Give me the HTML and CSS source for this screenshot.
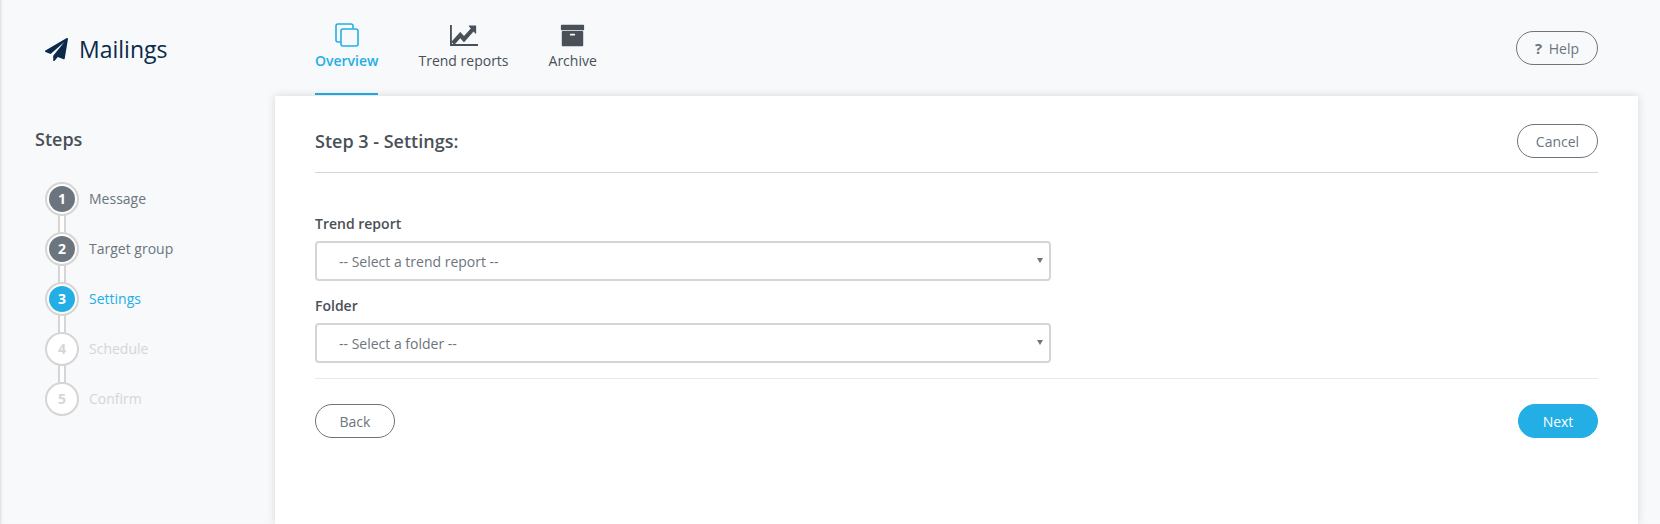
FILE: index.html
```html
<!DOCTYPE html>
<html lang="en">
  <head>
    <title>Mailings</title>
    <meta charset="UTF-8" />
    <link rel="stylesheet" href="styles.css">
  </head>
  <body>
    <header class="top-bar">
      <div class="logo">
        <svg class="logo-icon" viewBox="0 0 1792 1792"><path d="M1764 11q33 24 27 64l-256 1536q-5 29-32 45-14 8-31 8-11 0-24-5l-453-185-242 295q-18 23-49 23-13 0-22-4-19-7-30.5-23.5t-11.5-36.5v-349l864-1059-1069 925-395-162q-37-14-40-55-2-40 32-59l1664-960q15-9 32-9 20 0 36 11z"/></svg>
        <span>Mailings</span>
      </div>
      <nav class="tabs">
        <a class="tab tab-active">
          <span class="tab-icon">
            <svg class="icon-copy" viewBox="0 0 24 24"><path d="M18 5.500V3a2 2 0 0 0-2-2H3a2 2 0 0 0-2 2v14a2 2 0 0 0 2 2h2.500"/><rect x="6" y="6" width="17" height="17" rx="2"/></svg>
          </span>
          Overview
        </a>
        <a class="tab">
          <span class="tab-icon">
            <svg class="icon-chart" viewBox="0 320 1920 1280" preserveAspectRatio="none"><path d="M1920 1472v128h-1920v-1280h128v1152h1792zm-128-1088v435q0 21-19.500 29.500t-35.500-7.500l-121-121-633 633q-10 10-23 10t-23-10l-233-233-416 416-192-192 585-585q10-10 23-10t23 10l233 233 464-464-121-121q-16-16-7.500-35.500t29.500-19.500h435q14 0 23 9t9 23z"/></svg>
          </span>
          Trend reports
        </a>
        <a class="tab">
          <span class="tab-icon">
            <svg class="icon-archive" viewBox="0 0 1792 1792"><path d="M1088 832q0-26-19-45t-45-19h-256q-26 0-45 19t-19 45 19 45 45 19h256q26 0 45-19t19-45zm576-192v960q0 26-19 45t-45 19h-1408q-26 0-45-19t-19-45v-960q0-26 19-45t45-19h1408q26 0 45 19t19 45zm64-448v256q0 26-19 45t-45 19h-1536q-26 0-45-19t-19-45v-256q0-26 19-45t45-19h1536q26 0 45 19t19 45z"/></svg>
          </span>
          Archive
        </a>
      </nav>
      <button class="btn btn-help" type="button"><b>?</b> Help</button>
    </header>

    <div class="main">
      <aside class="sidebar">
        <div class="sidebar-title">Steps</div>
        <ol class="steps">
          <li class="step step-done"><span class="step-ring"><span class="step-num">1</span></span>Message</li>
          <li class="step step-done"><span class="step-ring"><span class="step-num">2</span></span>Target group</li>
          <li class="step step-current"><span class="step-ring"><span class="step-num">3</span></span>Settings</li>
          <li class="step"><span class="step-ring"><span class="step-num">4</span></span>Schedule</li>
          <li class="step"><span class="step-ring"><span class="step-num">5</span></span>Confirm</li>
        </ol>
      </aside>

      <section class="card">
        <div class="card-head">
          <h2 class="card-title">Step 3 - Settings:</h2>
          <button class="btn btn-cancel" type="button">Cancel</button>
        </div>
        <form class="settings">
          <div class="field">
            <label class="field-label">Trend report</label>
            <div class="select-wrapper">
              <select><option>-- Select a trend report --</option></select>
            </div>
          </div>
          <div class="field">
            <label class="field-label">Folder</label>
            <div class="select-wrapper">
              <select><option>-- Select a folder --</option></select>
            </div>
          </div>
          <div class="card-foot">
            <button class="btn btn-back" type="button">Back</button>
            <button class="btn btn-next" type="button">Next</button>
          </div>
        </form>
      </section>
    </div>
  </body>
</html>
```

FILE: styles.css
```css
html,
body {
  height: 100%;
}

body {
  margin: 0;
  background-color: #f7f9fb;
  box-shadow: inset 3px 0 3px -2px rgba(0, 0, 0, 0.12);
  color: #6c757d;
  font-family: "Open Sans", sans-serif;
  font-size: 14px;
  line-height: 20px;
  overflow: hidden;
}

/* top bar */
.top-bar {
  display: flex;
  height: 96px;
}

.logo {
  display: flex;
  align-items: center;
  width: 270px;
  padding: 2px 0 0 45px;
  color: #0b2a4a;
  font-size: 23px;
}

.logo-icon {
  width: 23px;
  height: 23px;
  margin: 0 11px 0 0;
  fill: #0b2a4a;
}

.tabs {
  display: flex;
  gap: 40px;
}

.tab {
  display: flex;
  flex-direction: column;
  align-items: center;
  box-sizing: border-box;
  height: 95px;
  padding-top: 23px;
  color: #495057;
}

.tab-active {
  border-bottom: 2px solid #23aee6;
  color: #23aee6;
  font-weight: 600;
}

.tab-icon {
  display: flex;
  align-items: center;
  height: 24px;
  margin-bottom: 4px;
}

.icon-copy {
  width: 24px;
  height: 24px;
  fill: none;
  stroke: #23aee6;
  stroke-width: 1.6;
}

.icon-chart {
  width: 28px;
  height: 21px;
  fill: #495057;
}

.icon-archive {
  width: 25px;
  height: 25px;
  fill: #495057;
}

/* buttons */
.btn {
  box-sizing: border-box;
  height: 34px;
  padding: 0;
  border: 1px solid #6c757d;
  border-radius: 17px;
  background: transparent;
  color: #6c757d;
  font-family: inherit;
  font-size: 14px;
  cursor: pointer;
}

.btn-help {
  width: 82px;
  margin: 31px 62px 0 auto;
}

.btn-help b {
  margin-right: 3px;
  font-size: 15px;
}

.btn-cancel {
  width: 81px;
}

.btn-back {
  width: 80px;
}

.btn-next {
  width: 80px;
  border-color: #23aee6;
  background-color: #23aee6;
  color: #fff;
}

/* steps */
.main {
  display: flex;
}

.sidebar {
  box-sizing: border-box;
  width: 275px;
  padding: 32px 0 0 35px;
}

.sidebar-title {
  margin-bottom: 24px;
  color: #495057;
  font-size: 18px;
  font-weight: 600;
  line-height: 22px;
}

.steps {
  margin: 0;
  padding: 0 0 0 10px;
  list-style: none;
}

.step {
  position: relative;
  display: flex;
  align-items: center;
  height: 50px;
  color: #d6d6d6;
}

.step-done {
  color: #6c757d;
}

.step-current {
  color: #23aee6;
  font-weight: 500;
}

.step:not(:last-child)::after {
  content: "";
  position: absolute;
  left: 13px;
  top: 40px;
  width: 4px;
  height: 20px;
  border: solid #d5d5d5;
  border-width: 0 2px;
  background-color: #fff;
}

.step-ring {
  position: relative;
  z-index: 1;
  display: block;
  box-sizing: border-box;
  width: 34px;
  height: 34px;
  margin-right: 10px;
  padding: 2px;
  border: 2px solid #d5d5d5;
  border-radius: 50%;
  background-color: #fff;
}

.step-num {
  display: block;
  width: 26px;
  height: 26px;
  border-radius: 50%;
  color: #d6d6d6;
  font-weight: 700;
  line-height: 26px;
  text-align: center;
}

.step-done .step-num {
  background-color: #6c757d;
  color: #fff;
}

.step-current .step-num {
  background-color: #23aee6;
  color: #fff;
}

/* card */
.card {
  box-sizing: border-box;
  width: 1363px;
  height: 428px;
  padding: 28px 40px 0;
  background-color: #fff;
  box-shadow: 0 0 8px rgba(0, 0, 0, 0.14);
}

.card-head {
  display: flex;
  justify-content: space-between;
  align-items: center;
  padding-bottom: 14px;
  border-bottom: 1px solid #d5d5d5;
}

.card-title {
  margin: 0;
  color: #495057;
  font-size: 18px;
  font-weight: 600;
}

.settings {
  padding-top: 41px;
}

.field {
  margin-bottom: 15px;
}

.field-label {
  display: block;
  margin-bottom: 7px;
  color: #495057;
  font-weight: 600;
}

.select-wrapper {
  position: relative;
  width: 736px;
}

.select-wrapper::after {
  content: "";
  position: absolute;
  right: 8px;
  top: 17px;
  border: solid transparent;
  border-width: 5px 3px 0;
  border-top-color: #6c757d;
}

select {
  display: block;
  box-sizing: border-box;
  width: 100%;
  height: 40px;
  padding: 0 22px;
  border: 2px solid #d5d5d5;
  border-radius: 4px;
  background-color: #fff;
  color: #6c757d;
  font-family: inherit;
  font-size: 14px;
  appearance: none;
}

.card-foot {
  display: flex;
  justify-content: space-between;
  margin-top: 13px;
  padding-top: 25px;
  border-top: 1px solid #e9e9e9;
}
```
